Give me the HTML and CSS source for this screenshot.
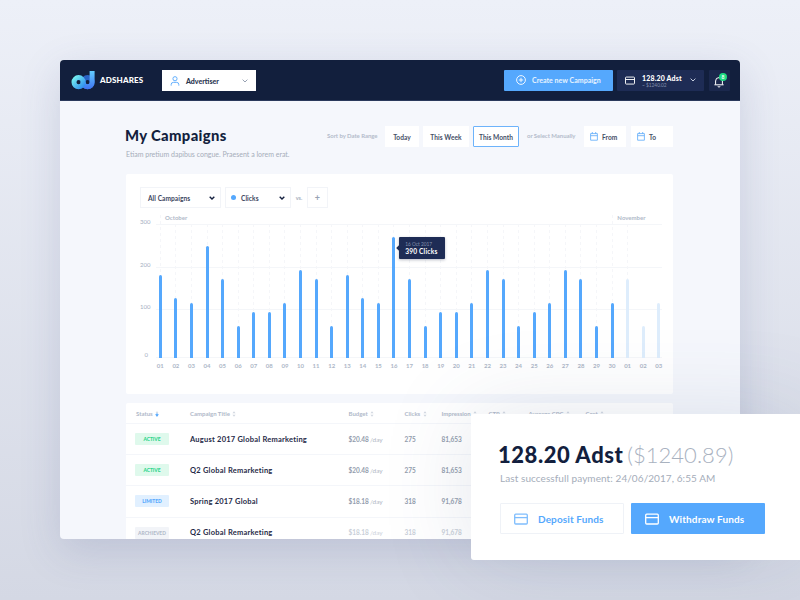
FILE: index.html
```html
<!DOCTYPE html>
<html lang="en">
<head>
  <meta charset="UTF-8" />
  <meta name="viewport" content="width=device-width, initial-scale=1.0"/>
  <title>My Campaigns | Adshares</title>
  <link rel="stylesheet" href="styles.css">
</head>
<body>
  <svg class="sprite" width="0" height="0">
    <symbol id="card" viewBox="0 0 14 12">
      <rect x="0.7" y="1.2" width="12.6" height="9.8" rx="1" fill="none" stroke="currentColor" stroke-width="1.3"/>
      <path d="M0.6 4.6h12.8" fill="none" stroke="currentColor" stroke-width="1.3"/>
    </symbol>
    <symbol id="calendar" viewBox="0 0 8 9">
      <path d="M.6 1.6h6.8v6.6H.6zM.6 3.7h6.8M2.3 0v2M5.7 0v2" fill="none" stroke="currentColor" stroke-width=".9"/>
    </symbol>
    <symbol id="chevron" viewBox="0 0 6 4">
      <path d="M.6.6L3 3L5.4.6" fill="none" stroke="currentColor"/>
    </symbol>
    <symbol id="chevron-bold" viewBox="0 0 6 4">
      <path d="M.7.7L3 3L5.3.7" fill="none" stroke="currentColor" stroke-width="1.4"/>
    </symbol>
    <symbol id="sort" viewBox="0 0 4 6">
      <path d="M2 .2L3.5 2.2H.5zM2 5.8L.5 3.8h3z" fill="currentColor" opacity=".6"/>
    </symbol>
  </svg>

  <div class="window">
    <header class="topbar">
      <svg class="logo" viewBox="0 0 24 20">
        <defs>
          <linearGradient id="lg1" x1="0" y1="0" x2="1" y2="1">
            <stop offset="0" stop-color="#74eef0"/>
            <stop offset="1" stop-color="#3391ee"/>
          </linearGradient>
          <linearGradient id="lg2" x1="17" y1="1" x2="17" y2="19" gradientUnits="userSpaceOnUse">
            <stop offset="0" stop-color="#62ccff"/>
            <stop offset="1" stop-color="#3f74f2"/>
          </linearGradient>
        </defs>
        <g fill="none">
          <circle cx="16.6" cy="12.2" r="4.6" stroke="#2a63c4" stroke-width="5"/>
          <path d="M21.1 1V12.2A4.5 4.5 0 0 1 12.1 12.2" stroke="url(#lg2)" stroke-width="5"/>
          <circle cx="7.6" cy="12.2" r="4.6" stroke="url(#lg1)" stroke-width="5"/>
        </g>
      </svg>
      <span class="brand">ADSHARES</span>
      <div class="role">
        <svg class="user-icon" viewBox="0 0 10 11">
          <circle cx="5" cy="3" r="2.3"/>
          <path d="M.8 10.6V9.4Q.8 7 3.2 7H6.8Q9.2 7 9.2 9.4V10.6"/>
        </svg>
        <span>Advertiser</span>
        <svg class="chev"><use href="#chevron"/></svg>
      </div>
      <button class="create">
        <svg viewBox="0 0 10 10"><circle cx="5" cy="5" r="4.4"/><path d="M5 2.8v4.4M2.8 5h4.4"/></svg>
        Create new Campaign
      </button>
      <div class="wallet">
        <svg class="card-icon"><use href="#card"/></svg>
        <div class="amount">
          <strong>128.20 Adst</strong>
          <small>~ $1240.02</small>
        </div>
        <svg class="chev"><use href="#chevron"/></svg>
      </div>
      <div class="bell">
        <svg viewBox="0 0 10 12"><path d="M.4 8.8h9.2M1.6 8.6V5Q1.6 1.6 5 1.6T8.4 5V8.6M3.7 10.4Q5 11.8 6.3 10.4"/></svg>
        <span class="count">8</span>
      </div>
    </header>

    <main>
      <div class="page-head">
        <div class="titles">
          <h1>My Campaigns</h1>
          <p>Etiam pretium dapibus congue. Praesent a lorem erat.</p>
        </div>
        <div class="filters">
          <span class="hint">Sort by Date Range</span>
          <button class="today">Today</button>
          <button class="week">This Week</button>
          <button class="month active">This Month</button>
          <span class="hint manual">or Select Manually</span>
          <button class="date"><svg><use href="#calendar"/></svg>From</button>
          <button class="date"><svg><use href="#calendar"/></svg>To</button>
        </div>
      </div>

      <section class="chart-card">
        <div class="selects">
          <div class="select campaigns">All Campaigns <svg><use href="#chevron-bold"/></svg></div>
          <div class="select clicks"><i class="dot"></i>Clicks <svg><use href="#chevron-bold"/></svg></div>
          <span class="vs">vs.</span>
          <div class="select plus">+</div>
        </div>
        <div class="chart">
          <div class="scale"><span>300</span><span>200</span><span>100</span><span>0</span></div>
          <div class="plot">
            <div class="months"><span>October</span><span>November</span></div>
            <div class="lines"><i></i><i></i><i></i></div>
            <div class="days">
              <div class="day first"><i style="height:83px"></i><span>01</span></div>
              <div class="day"><i style="height:60px"></i><span>02</span></div>
              <div class="day"><i style="height:55px"></i><span>03</span></div>
              <div class="day"><i style="height:112px"></i><span>04</span></div>
              <div class="day"><i style="height:79px"></i><span>05</span></div>
              <div class="day"><i style="height:32px"></i><span>06</span></div>
              <div class="day"><i style="height:46px"></i><span>07</span></div>
              <div class="day"><i style="height:46px"></i><span>08</span></div>
              <div class="day"><i style="height:55px"></i><span>09</span></div>
              <div class="day"><i style="height:88px"></i><span>10</span></div>
              <div class="day"><i style="height:79px"></i><span>11</span></div>
              <div class="day"><i style="height:32px"></i><span>12</span></div>
              <div class="day"><i style="height:83px"></i><span>13</span></div>
              <div class="day"><i style="height:60px"></i><span>14</span></div>
              <div class="day"><i style="height:55px"></i><span>15</span></div>
              <div class="day current">
                <i style="height:121px"></i><span>16</span>
                <div class="tooltip"><small>16 Oct 2017</small><b>390 Clicks</b></div>
              </div>
              <div class="day"><i style="height:79px"></i><span>17</span></div>
              <div class="day"><i style="height:32px"></i><span>18</span></div>
              <div class="day"><i style="height:46px"></i><span>19</span></div>
              <div class="day"><i style="height:46px"></i><span>20</span></div>
              <div class="day"><i style="height:55px"></i><span>21</span></div>
              <div class="day"><i style="height:88px"></i><span>22</span></div>
              <div class="day"><i style="height:79px"></i><span>23</span></div>
              <div class="day"><i style="height:32px"></i><span>24</span></div>
              <div class="day"><i style="height:46px"></i><span>25</span></div>
              <div class="day"><i style="height:55px"></i><span>26</span></div>
              <div class="day"><i style="height:88px"></i><span>27</span></div>
              <div class="day"><i style="height:79px"></i><span>28</span></div>
              <div class="day"><i style="height:32px"></i><span>29</span></div>
              <div class="day first"><i style="height:55px"></i><span>30</span></div>
              <div class="day next"><i style="height:79px"></i><span>01</span></div>
              <div class="day next plain"><i style="height:32px"></i><span>02</span></div>
              <div class="day next plain"><i style="height:55px"></i><span>03</span></div>
            </div>
          </div>
        </div>
      </section>

      <section class="table">
        <div class="row head">
          <span>Status <svg class="sorted" viewBox="0 0 4 6"><path d="M2 .2L3.4 1.8H.6z" fill="#c9d1dc"/><path d="M1.4 2.2h1.2V3.2H3.9L2 5.9L.1 3.2H1.4z" fill="#55a8fd"/></svg></span>
          <span>Campaign Title <svg><use href="#sort"/></svg></span>
          <span>Budget <svg><use href="#sort"/></svg></span>
          <span>Clicks <svg><use href="#sort"/></svg></span>
          <span>Impression <svg><use href="#sort"/></svg></span>
          <span>CTR <svg><use href="#sort"/></svg></span>
          <span>Average CPC <svg><use href="#sort"/></svg></span>
          <span>Cost <svg><use href="#sort"/></svg></span>
        </div>
        <div class="row">
          <span class="tag green">ACTIVE</span>
          <span class="name">August 2017 Global Remarketing</span>
          <span>$20.48<em>/day</em></span><span>275</span><span>81,653</span>
        </div>
        <div class="row">
          <span class="tag green">ACTIVE</span>
          <span class="name">Q2 Global Remarketing</span>
          <span>$20.48<em>/day</em></span><span>275</span><span>81,653</span>
        </div>
        <div class="row">
          <span class="tag blue">LIMITED</span>
          <span class="name">Spring 2017 Global</span>
          <span>$18.18<em>/day</em></span><span>318</span><span>91,678</span>
        </div>
        <div class="row archived">
          <span class="tag grey">ARCHIEVED</span>
          <span class="name">Q2 Global Remarketing</span>
          <span>$18.18<em>/day</em></span><span>318</span><span>91,678</span>
        </div>
      </section>
    </main>
  </div>

  <div class="funds">
    <h2>128.20 Adst <span>($1240.89)</span></h2>
    <p>Last successfull payment: 24/06/2017, 6:55 AM</p>
    <div class="actions">
      <button class="deposit"><svg><use href="#card"/></svg>Deposit Funds</button>
      <button class="withdraw"><svg><use href="#card"/></svg>Withdraw Funds</button>
    </div>
  </div>
</body>
</html>
```
FILE: styles.css
```css
* {
  box-sizing: border-box;
}

body {
  margin: 0;
  width: 800px;
  height: 600px;
  overflow: hidden;
  position: relative;
  padding: 60px;
  font-family: Lato, sans-serif;
  color: #131f3e;
  background: linear-gradient(#edf0f8, #d4d8e4);
}

h1, h2, p {
  margin: 0;
}

button {
  font-family: inherit;
  border: none;
  padding: 0;
}

svg {
  flex: none;
}

.sprite {
  position: absolute;
}

.window {
  width: 680px;
  height: 479px;
  overflow: hidden;
  background: #f5f7fc;
  border-radius: 4px;
  box-shadow: 0 12px 40px rgba(70, 85, 140, .18);
}

/* top bar */
.topbar {
  height: 41px;
  background: #121f3d;
  border-bottom: 1px solid #2b3a5c;
  display: flex;
  align-items: center;
  padding: 0 10px 0 11px;
}

.logo {
  width: 24px;
  height: 20px;
}

.brand {
  margin-left: 5px;
  width: 62px;
  color: #fff;
  font-size: 8px;
  font-weight: 900;
  letter-spacing: .15px;
}

.role {
  width: 94px;
  height: 21px;
  background: #fff;
  display: flex;
  align-items: center;
  padding: 1px 8px 0;
  font-size: 7px;
  font-weight: 900;
  color: #2a3550;
}

.user-icon {
  width: 10px;
  height: 10px;
  margin-right: 6px;
  fill: none;
  stroke: #55a8fd;
  stroke-width: 1;
}

.chev {
  width: 6px;
  height: 4px;
  margin-left: auto;
  color: #98a2b3;
}

.wallet .chev {
  color: #c3cbdc;
}

.create {
  width: 109px;
  height: 21px;
  margin-left: auto;
  background: #55a8fd;
  border-radius: 1px;
  color: #e6f3ff;
  font-size: 7px;
  font-weight: 700;
  letter-spacing: .03px;
  display: flex;
  align-items: center;
  padding-left: 12px;
}

.create svg {
  width: 10px;
  height: 10px;
  margin-right: 6px;
  fill: none;
  stroke: #fff;
  stroke-width: .9;
}

.wallet {
  width: 87px;
  height: 21px;
  margin: 0 5px 0 4px;
  padding: 0 8px;
  background: #1e2c55;
  border-radius: 1px;
  color: #fff;
  display: flex;
  align-items: center;
}

.card-icon {
  width: 10px;
  height: 9px;
}

.amount {
  margin-left: 7px;
  padding-top: 1px;
}

.amount strong {
  display: block;
  font-size: 7px;
  line-height: 8px;
  font-weight: 900;
  letter-spacing: .17px;
}

.amount small {
  display: block;
  font-size: 4.8px;
  line-height: 6px;
  color: #8390ad;
}

.bell {
  position: relative;
  width: 21px;
  height: 21px;
  background: #1b284d;
  border-radius: 1px;
}

.bell svg {
  width: 10px;
  height: 12px;
  margin: 6px 5px;
  fill: none;
  stroke: #fff;
  stroke-width: 1;
}

.count {
  position: absolute;
  top: 3px;
  right: 3px;
  width: 8px;
  height: 8px;
  border-radius: 50%;
  background: #1fdb83;
  color: #fff;
  font-size: 5px;
  line-height: 8px;
  font-weight: 700;
  text-align: center;
}

/* title and date filters */
main {
  padding: 25px 67px 0 66px;
}

.page-head {
  display: flex;
  justify-content: space-between;
  height: 48px;
}

h1 {
  margin-left: -1px;
  font-size: 14.8px;
  line-height: 19px;
  font-weight: 900;
  letter-spacing: .35px;
}

.titles p {
  margin-top: 5px;
  font-size: 7px;
  line-height: 9px;
  color: #a5adba;
}

.filters {
  display: flex;
  height: 21px;
}

.filters button {
  height: 21px;
  margin-right: 4px;
  background: #fff;
  color: #444e66;
  font-size: 6.6px;
  font-weight: 700;
  letter-spacing: .05px;
}

.filters .today { width: 34px; }
.filters .week { width: 46px; }
.filters .month { width: 46px; }

.filters .active {
  border: 1px solid #6db3fb;
  border-radius: 1px;
}

.filters .date {
  width: 42px;
  margin-right: 5px;
  display: flex;
  align-items: center;
  padding-left: 6px;
}

.filters .date:last-child {
  margin-right: 0;
}

.date svg {
  width: 8px;
  height: 9px;
  margin-right: 4px;
  color: #6db3fb;
}

.hint {
  width: 58px;
  font-size: 6px;
  line-height: 19px;
  color: #b4bccb;
  font-weight: 700;
  white-space: nowrap;
  letter-spacing: -.05px;
}

.manual {
  width: 53px;
  margin: 0 4px;
}

/* chart */
.chart-card {
  height: 220px;
  background: #fff;
  border-radius: 2px;
  padding: 13px 0 0 14px;
}

.selects {
  display: flex;
  align-items: center;
  height: 21px;
}

.select {
  height: 21px;
  border: 1px solid #f2f4f8;
  display: flex;
  align-items: center;
  padding: 0 5px 0 7px;
  font-size: 6.6px;
  font-weight: 700;
  letter-spacing: .05px;
  color: #3c4660;
}

.select svg {
  width: 6px;
  height: 4px;
  margin-left: auto;
  color: #131f3e;
}

.campaigns {
  width: 81px;
  margin-right: 4px;
}

.clicks {
  width: 66px;
  padding-left: 5px;
}

.dot {
  width: 5px;
  height: 5px;
  margin-right: 5px;
  border-radius: 50%;
  background: #55a8fd;
}

.vs {
  width: 16px;
  text-align: center;
  font-size: 5.5px;
  font-weight: 700;
  color: #a5adba;
}

.select.plus {
  width: 21px;
  padding: 0;
  justify-content: center;
  color: #98a2b3;
  font-size: 9px;
}

.chart {
  display: flex;
}

.scale {
  width: 10px;
  padding-top: 10px;
  display: flex;
  flex-direction: column;
  font-size: 6px;
  line-height: 8px;
  color: #a5b0c2;
  text-align: right;
}

.scale span {
  height: 42.5px;
}

.scale span:nth-child(3) {
  height: 48px;
}

.scale span:last-child {
  padding-right: 2px;
}

.plot {
  position: relative;
  width: 513.9px;
  margin-left: 2.5px;
}

.months {
  height: 16px;
  padding: 6px 21px 0 12.5px;
  display: flex;
  justify-content: space-between;
  font-size: 6px;
  font-weight: 700;
  line-height: 8px;
  color: #b0b9c9;
}

.lines {
  position: absolute;
  top: 16px;
  left: 3px;
  width: 506px;
  height: 134px;
  border-top: 1px solid #f4f6f9;
  border-bottom: 1px solid #f4f6f9;
}

.lines i {
  display: block;
  height: 42.5px;
  border-bottom: 1px solid #f4f6f9;
}

.lines i:last-child {
  display: none;
}

.days {
  position: relative;
  display: flex;
  height: 134px;
}

.day {
  position: relative;
  flex: 1;
  display: flex;
  flex-direction: column;
  justify-content: flex-end;
  align-items: center;
  background: repeating-linear-gradient(#f5f6f9 0 3px, transparent 3px 6px) center top / 1px 100% no-repeat;
}

.day.first {
  margin-top: -9px;
}

.day.plain {
  background: none;
}

.day.current {
  z-index: 1;
}

.day i {
  width: 3px;
  background: #55a8fd;
  border-radius: 1.5px 1.5px 0 0;
}

.day span {
  height: 0;
  font-size: 6px;
  font-weight: 700;
  line-height: 15px;
  color: #adb7c7;
}

.day.next i {
  background: #deedfc;
}

.tooltip {
  position: absolute;
  left: 13px;
  top: 13px;
  width: 46px;
  height: 22px;
  padding: 4px 0 0 6px;
  background: #1e2c55;
  border-radius: 1px;
  box-shadow: 0 1px 3px rgba(19, 31, 62, .3);
  color: #fff;
  white-space: nowrap;
}

.tooltip::before {
  content: "";
  position: absolute;
  left: -2px;
  top: 9px;
  width: 4px;
  height: 4px;
  background: #1e2c55;
  transform: rotate(45deg);
}

.tooltip small {
  display: block;
  font-size: 4.8px;
  line-height: 6px;
  color: #8390ad;
}

.tooltip b {
  display: block;
  font-size: 6.6px;
  line-height: 8px;
  letter-spacing: .2px;
}

/* campaigns table */
.table {
  margin-top: 9px;
  background: #fff;
  border-radius: 2px;
}

.row {
  height: 31.2px;
  padding-left: 9px;
  display: grid;
  grid-template-columns: 55px 158.5px 56px 37px 47px 40px 57px 1fr;
  align-items: center;
  border-bottom: 1px solid #f4f6fa;
  font-size: 6.5px;
  font-weight: 700;
  color: #939dad;
  white-space: nowrap;
}

.row.head {
  height: 21px;
  font-size: 6px;
  color: #b0b9c9;
}

.row.head span:first-child {
  padding-left: 1px;
}

.head svg {
  width: 4px;
  height: 6px;
  margin-left: 1px;
  vertical-align: -1px;
}

.row em {
  margin-left: 1px;
  font-style: normal;
  font-weight: 400;
  color: #b0b8c5;
}

.row .name {
  font-size: 7.5px;
  letter-spacing: .23px;
  color: #1f2a47;
}

.row.archived {
  color: #c9cfd8;
}

.row.archived em {
  color: #ccd2db;
}

.tag {
  width: 34px;
  height: 12px;
  border-radius: 1px;
  font-size: 4.9px;
  line-height: 12px;
  font-weight: 900;
  text-align: center;
}

.green { background: #dff9ec; color: #2ed58b; }
.blue { background: #e1f0ff; color: #55a8fd; }
.grey { background: #f2f4f8; color: #b4bccb; }

/* funds card lying over the window */
.funds {
  position: absolute;
  left: 471px;
  top: 414px;
  width: 340px;
  height: 146px;
  padding: 28px 0 0 28px;
  background: #fff;
  border-radius: 3px;
  box-shadow: 0 0 90px rgba(70, 85, 125, .15);
}

.funds h2 {
  margin-left: -1px;
  font-size: 22px;
  line-height: 26px;
  font-weight: 900;
  letter-spacing: .55px;
  white-space: nowrap;
}

.funds h2 span {
  margin-left: -2px;
  font-weight: 300;
  letter-spacing: .05px;
  color: #a9b2bf;
}

.funds p {
  margin-top: 4px;
  padding-left: 1px;
  font-size: 10px;
  line-height: 12px;
  letter-spacing: .08px;
  color: #a5adba;
}

.actions {
  display: flex;
  gap: 7px;
  margin-top: 19px;
  padding-left: 1px;
}

.actions button {
  height: 31px;
  display: flex;
  align-items: center;
  font-size: 10px;
  font-weight: 700;
  letter-spacing: .12px;
  border-radius: 1px;
}

.actions svg {
  width: 14px;
  height: 12px;
  margin-right: 10px;
}

.actions .deposit {
  width: 124px;
  padding-left: 13px;
  background: #fff;
  border: 1px solid #eff2f7;
  color: #55a8fd;
}

.deposit svg {
  opacity: .75;
}

.actions .withdraw {
  width: 134px;
  padding-left: 14px;
  background: #55a8fd;
  color: #fff;
}
```
